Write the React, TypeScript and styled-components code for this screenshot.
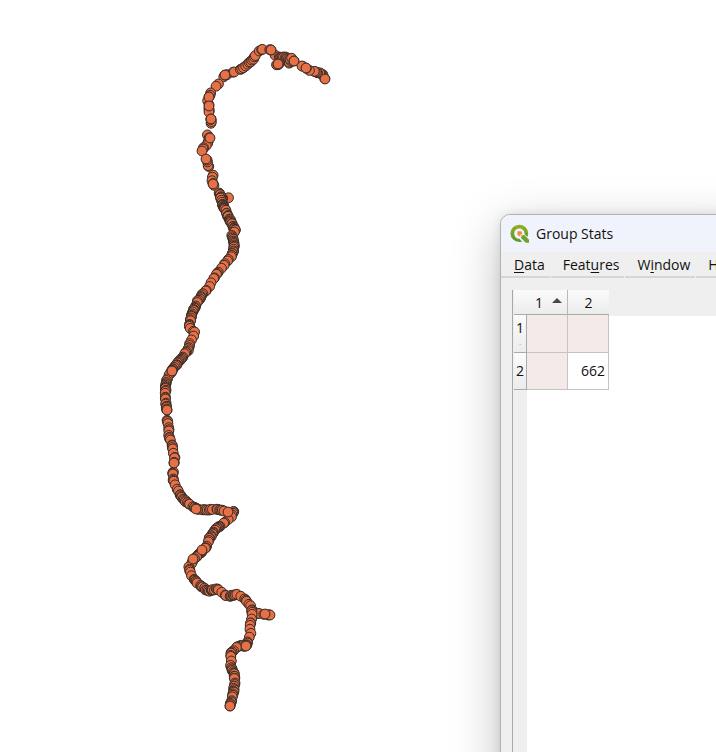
import React from "react";
import styled, { createGlobalStyle } from "styled-components";

const GlobalStyle = createGlobalStyle`
  * { box-sizing: border-box; }
  body { margin: 0; background: #fff; overflow: hidden; }
`;

const Desktop = styled.main`
  position: relative;
  height: 100vh;
  overflow: hidden;
  background: #fff;
  color: #111;
  font-family: "Open Sans", "Noto Sans", sans-serif;
  font-size: 14px;
`;

const MapLayer = styled.svg`
  display: block;
`;

const Window = styled.section`
  position: absolute;
  left: 500px;
  top: 214px;
  right: -40px;
  bottom: -40px;
  display: flex;
  flex-direction: column;
  border: 1px solid #b1b1b1;
  border-radius: 10px;
  overflow: hidden;
  background: #efefef;
  box-shadow: 0 14px 48px rgba(0, 0, 0, 0.25), 0 0 10px rgba(0, 0, 0, 0.1);
`;

const TitleBar = styled.header`
  display: flex;
  align-items: center;
  gap: 6px;
  height: 37px;
  flex: none;
  padding-left: 9px;
  background: #f0f3fb;
`;

const Title = styled.h1`
  margin: 0;
  font-size: 14px;
  font-weight: 400;
  line-height: 20px;
`;

const MenuBar = styled.nav`
  display: flex;
  flex: none;
  gap: 1px;
  height: 26px;
`;

const MenuButton = styled.button<{ $grow?: boolean }>`
  flex: ${(p) => (p.$grow ? "1 0 auto" : "none")};
  padding: 2px 5px 0 13px;
  border: 0;
  border-bottom: 2px solid #d6d6d6;
  background: transparent;
  color: inherit;
  font: inherit;
  line-height: 22px;
  text-align: left;
  white-space: nowrap;

  & + & { padding-left: 12px; }

  u {
    text-decoration-thickness: 1px;
    text-underline-offset: 2px;
  }
`;

const TableFrame = styled.div`
  flex: 1;
  margin: 12px 0 0 11px;
  border-left: 1px solid #a8a8a8;
  padding-left: 1px;
  background: linear-gradient(#efefef, #efefef) 0 0 / 100% 26px no-repeat,
    linear-gradient(#efefef, #efefef) 0 0 / 14px 100% no-repeat, #fff;
`;

const Grid = styled.table`
  border-collapse: separate;
  border-spacing: 0;
  table-layout: fixed;
  width: 95px;
  line-height: 20px;
`;

const Col = styled.col<{ $width: number }>`
  width: ${(p) => p.$width}px;
`;

const HeadCell = styled.th<{ $last?: boolean }>`
  height: 25px;
  padding: 2px 0 0;
  border-bottom: 1px solid #aaa;
  border-right: ${(p) => (p.$last ? "0" : "1px solid #b9b9b9")};
  background: linear-gradient(#fbfbfb, #ececec);
  font-weight: 400;
  text-align: center;
`;

const HeadRow = styled.tr`
  & > ${HeadCell}:first-child { border-right: 0; }
`;

const SortButton = styled.button`
  display: flex;
  align-items: center;
  justify-content: flex-end;
  gap: 9px;
  width: 100%;
  padding: 0 5px 0 0;
  border: 0;
  background: transparent;
  color: inherit;
  font: inherit;
  line-height: 20px;
`;

const SortArrow = styled.svg`
  display: block;
  margin-bottom: 5px;
`;

const RowHead = styled.th`
  height: 37px;
  padding: 0;
  border-right: 1px solid #aaa;
  border-bottom: 1px solid #aaa;
  background: linear-gradient(#fbfbfb, #ececec);
  font-weight: 400;
  line-height: 20px;
  text-align: center;
`;

const Dot = styled.span`
  display: block;
  color: #888;
  font-size: 8px;
  line-height: 12px;
`;

const BodyRow = styled.tr`
  &:first-child > * { height: 38px; }
`;

const Cell = styled.td<{ $label?: boolean }>`
  height: 37px;
  padding: 0 3px 0 0;
  border-right: 1px solid #c4c4c4;
  border-bottom: 1px solid #c4c4c4;
  background: ${(p) => (p.$label ? "#f4eaea" : "#fff")};
  text-align: right;
`;

type Point = [number, number];
type Run = { gap: number; points: Point[] };

/* Stretches of the track; each one is drawn over the ones before it. */
const runs: Run[] = [
  { gap: 2, points: [[325, 79], [322, 74], [317, 72], [310, 71], [305, 67], [302, 66]] },
  { gap: 2, points: [[275, 55], [280, 58], [286, 57], [289, 63], [291, 58], [294, 61]] },
  { gap: 3, points: [[277, 65], [279, 64]] },
  { gap: 4, points: [[225, 75], [222, 80], [218, 85], [212, 91], [209, 97]] },
  { gap: 3, points: [[225, 75], [231, 73], [238, 71], [246, 66], [253, 59], [258, 52], [263, 49], [271, 50]] },
  { gap: 5, points: [[208, 101], [209, 106], [209, 112]] },
  { gap: 2, points: [[211, 123], [211, 119]] },
  { gap: 4, points: [[207, 135], [210, 138], [207, 144], [203, 149]] },
  { gap: 4, points: [[209, 167], [207, 160]] },
  { gap: 4, points: [[213, 175], [212, 181], [214, 185], [218, 191], [221, 196]] },
  { gap: 9, points: [[229, 198], [222, 198]] },
  { gap: 1, points: [[220, 194], [222, 203], [227, 214], [232, 224], [235, 230]] },
  { gap: 2, points: [[235, 230], [232, 236], [234, 243], [234, 250], [231, 257], [225, 264], [217, 273], [213, 280], [209, 287], [203, 294], [198, 301], [194, 309], [191, 317], [189, 327], [195, 332], [191, 341], [188, 350], [183, 357], [176, 365], [172, 371]] },
  { gap: 2, points: [[172, 371], [167, 379], [166, 387], [165, 396], [166, 405], [167, 410]] },
  { gap: 2, points: [[167, 420], [169, 427], [169, 437], [172, 446], [173, 454], [175, 458], [174, 463]] },
  { gap: 2, points: [[173, 472], [173, 480], [177, 489], [182, 498], [190, 505], [197, 509], [207, 510], [216, 509], [224, 511]] },
  { gap: 2, points: [[234, 511], [231, 518], [223, 524], [215, 530], [209, 539], [205, 549], [194, 559], [189, 567], [192, 577], [199, 585], [208, 591], [217, 589], [227, 597], [238, 594], [244, 598], [250, 605], [253, 611]] },
  { gap: 2, points: [[253, 613], [260, 614], [270, 615]] },
  { gap: 2, points: [[252, 611], [252, 620], [249, 627], [251, 633], [248, 640], [246, 646], [238, 646], [231, 653], [231, 661], [231, 668], [234, 674], [235, 681], [234, 688], [233, 696], [230, 706]] },
];

const markers: Point[] = [
  [225, 75], [271, 50], [278, 64], [294, 61], [306, 68], [325, 79], [209, 97], [209, 106],
  [211, 119], [210, 138], [202, 151], [206, 159], [213, 184], [172, 371],
  [167, 410], [174, 463], [196, 509], [228, 512], [202, 550], [193, 559],
  [265, 614], [246, 646], [230, 706],
];

function sampleRun({ gap, points }: Run, seed: number): Point[] {
  const out: Point[] = [];
  let state = seed * 977 + 31;
  const random = () => {
    state = (state * 1664525 + 1013904223) % 4294967296;
    return state / 4294967296;
  };
  let carry = 0;
  for (let i = 1; i < points.length; i++) {
    const [x0, y0] = points[i - 1];
    const [x1, y1] = points[i];
    const length = Math.hypot(x1 - x0, y1 - y0);
    while (carry < length) {
      const t = carry / length;
      out.push([
        x0 + (x1 - x0) * t + random() - 0.5,
        y0 + (y1 - y0) * t + random() - 0.5,
      ]);
      carry += gap * (random() < 0.25 ? 2.2 : 0.4 + random() * 0.6);
    }
    carry -= length;
  }
  out.push(points[points.length - 1]);
  return out;
}

const samples = [...runs.flatMap(sampleRun), ...markers];

function TrackMap() {
  return (
    <MapLayer width="340" height="720" viewBox="0 0 340 720" role="img" aria-label="Track points">
      <g fill="#e87046" stroke="#332b27" strokeWidth="1">
        {samples.map(([x, y], i) => (
          <circle key={i} cx={x} cy={y} r="4.9" />
        ))}
      </g>
    </MapLayer>
  );
}

function QgisLogo() {
  return (
    <svg width="20" height="20" viewBox="0 0 20 20" aria-hidden="true">
      <defs>
        <linearGradient id="leaf" x1="0" y1="0" x2="0" y2="1">
          <stop offset="0" stopColor="#93b023" />
          <stop offset="1" stopColor="#589632" />
        </linearGradient>
      </defs>
      <path
        d="M12 17.7A8.9 8.9 0 0 1 9.4 18.1 8.9 8.7 0 1 1 18.2 9.3c0 1.4-.3 2.7-.9 3.8l-2.8-2.8c.3-3.3-2-5.8-5.1-5.8A5 5 0 0 0 4.2 9.4c0 3 2.3 5.3 5.2 5.3Z"
        fill="url(#leaf)"
      />
      <path d="M11 11h3.2l4.8 4.7v3h-3.2L11 13.9Z" fill="#6da32d" />
      <path d="M7.4 7.2h3.8l1.4 2.7-2.1.6-.3 2-2.8-1.5Z" fill="#f28a3c" />
      <path d="m10.8 10.8 2.6.2-2.4 2.5Z" fill="#b9cf6a" />
    </svg>
  );
}

export default function App() {
  return (
    <>
      <GlobalStyle />
      <Desktop>
        <TrackMap />
        <Window aria-label="Group Stats">
          <TitleBar>
            <QgisLogo />
            <Title>Group Stats</Title>
          </TitleBar>
          <MenuBar>
            <MenuButton type="button"><u>D</u>ata</MenuButton>
            <MenuButton type="button">Feat<u>u</u>res</MenuButton>
            <MenuButton type="button">W<u>i</u>ndow</MenuButton>
            <MenuButton type="button" $grow>Help</MenuButton>
          </MenuBar>
          <TableFrame>
            <Grid>
              <colgroup>
                <Col $width={13} />
                <Col $width={41} />
                <Col $width={41} />
              </colgroup>
              <thead>
                <HeadRow>
                  <HeadCell aria-label="Row" />
                  <HeadCell scope="col" aria-sort="ascending">
                    <SortButton type="button">
                      1
                      <SortArrow width="10" height="5" viewBox="0 0 10 5" aria-hidden="true">
                        <path d="M0 5 5 0l5 5Z" fill="#484848" />
                      </SortArrow>
                    </SortButton>
                  </HeadCell>
                  <HeadCell scope="col" $last>2</HeadCell>
                </HeadRow>
              </thead>
              <tbody>
                <BodyRow>
                  <RowHead scope="row">1<Dot>·</Dot></RowHead>
                  <Cell $label />
                  <Cell $label />
                </BodyRow>
                <BodyRow>
                  <RowHead scope="row">2</RowHead>
                  <Cell $label />
                  <Cell>662</Cell>
                </BodyRow>
              </tbody>
            </Grid>
          </TableFrame>
        </Window>
      </Desktop>
    </>
  );
}
